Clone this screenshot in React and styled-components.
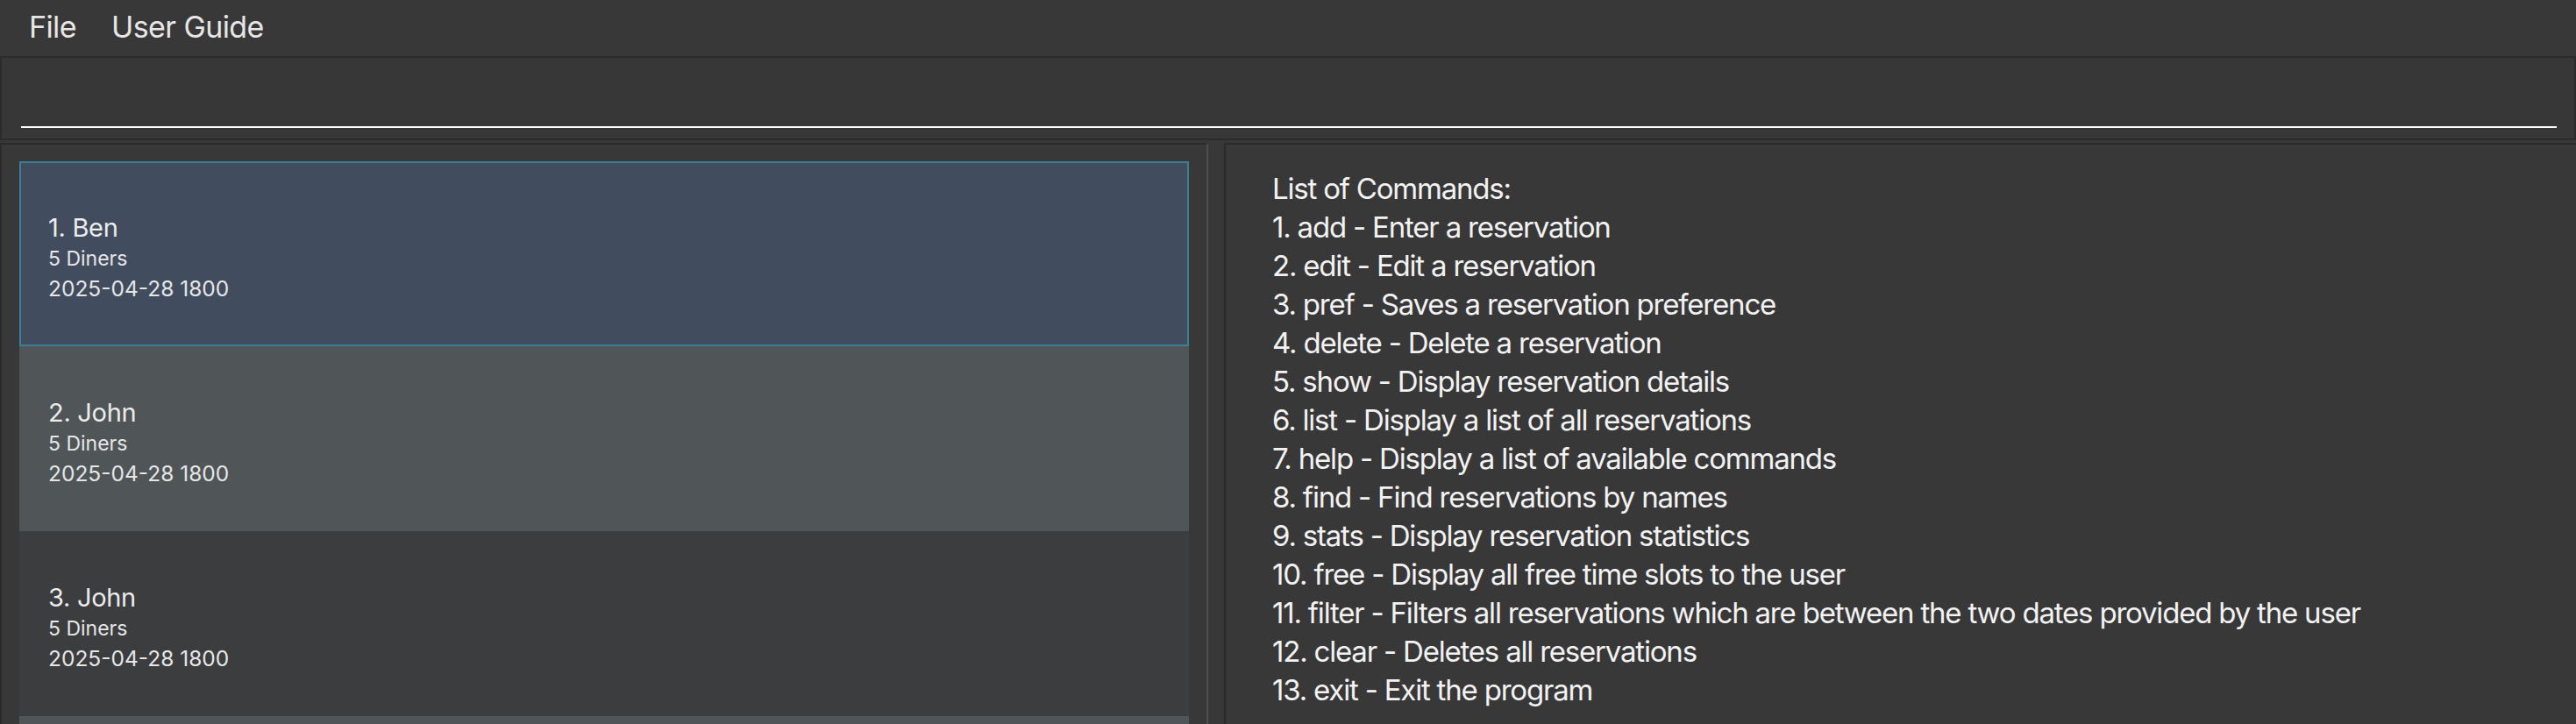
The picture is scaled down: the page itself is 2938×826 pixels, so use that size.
import React from 'react';
import styled, { createGlobalStyle } from 'styled-components';

const GlobalStyle = createGlobalStyle`
  html, body {
    margin: 0;
    padding: 0;
    height: 100%;
    overflow: hidden;
    background: #383838;
  }
  #root {
    height: 100vh;
  }
  * {
    box-sizing: border-box;
  }
`;

const Window = styled.div`
  height: 100vh;
  display: flex;
  flex-direction: column;
  background: #383838;
  font-family: Inter, "Noto Sans", sans-serif;
  color: #ececec;
`;

const MenuBar = styled.div`
  height: 66px;
  flex: none;
  display: flex;
  align-items: center;
  gap: 40px;
  padding: 0 33px 2px;
  border-bottom: 2px solid #2b2b2b;
  background: #383838;
`;

const MenuItem = styled.span`
  font-size: 34px;
  line-height: 1;
  letter-spacing: -0.6px;
  color: #e6e6e6;
`;

const CommandBox = styled.div`
  height: 94px;
  flex: none;
  display: flex;
  align-items: flex-end;
  padding: 0 20px 12px 22px;
  border: 2px solid #2b2b2b;
  border-top: none;
  background: #373737;
`;

const CommandInput = styled.input`
  width: 100%;
  height: 40px;
  background: transparent;
  border: none;
  border-bottom: 2px solid #ffffff;
  outline: none;
  color: #ffffff;
  font-family: inherit;
  font-size: 30px;
`;

const Main = styled.div`
  flex: 1;
  min-height: 0;
  display: flex;
  padding-top: 3px;
`;

const ListPanel = styled.div`
  width: 1378px;
  flex: none;
  padding: 19px 20px 0 20px;
  border-left: 2px solid #2b2b2b;
  border-top: 2px solid #2b2b2b;
  border-right: 2px solid #4d4d4d;
  display: flex;
  flex-direction: column;
  overflow: hidden;
`;

const Splitter = styled.div`
  width: 18px;
  flex: none;
  background: #383838;
`;

const Card = styled.div`
  height: 211px;
  flex: none;
  display: flex;
  flex-direction: column;
  justify-content: center;
  padding: 8px 0 0 31px;
  background: ${(p) => (p.$selected ? '#414d5f' : p.$odd ? '#3c3d3f' : '#505558')};
  border: 2px solid ${(p) => (p.$selected ? '#3b7f96' : 'transparent')};
`;

const Name = styled.div`
  font-size: 29px;
  line-height: 36px;
  letter-spacing: -0.3px;
  color: #ececec;
`;

const Detail = styled.div`
  font-size: ${(p) => p.$size}px;
  line-height: 34px;
  color: #e6e6e6;
`;

const HelpPanel = styled.div`
  flex: 1;
  padding: 28px 40px 0 53px;
  border-left: 2px solid #2b2b2b;
  border-top: 2px solid #2b2b2b;
  overflow: hidden;
`;

const HelpLine = styled.div`
  font-size: 33px;
  line-height: 44px;
  letter-spacing: -1.2px;
  color: #f2f2f2;
  white-space: nowrap;
`;

const reservations = [
  { name: 'Ben', diners: 5, when: '2025-04-28 1800' },
  { name: 'John', diners: 5, when: '2025-04-28 1800' },
  { name: 'John', diners: 5, when: '2025-04-28 1800' },
  { name: 'Mary', diners: 3, when: '2025-04-29 1900' },
];

const commands = [
  'List of Commands:',
  '1. add - Enter a reservation',
  '2. edit - Edit a reservation',
  '3. pref - Saves a reservation preference',
  '4. delete - Delete a reservation',
  '5. show - Display reservation details',
  '6. list - Display a list of all reservations',
  '7. help - Display a list of available commands',
  '8. find - Find reservations by names',
  '9. stats - Display reservation statistics',
  '10. free - Display all free time slots to the user',
  '11. filter - Filters all reservations which are between the two dates provided by the user',
  '12. clear - Deletes all reservations',
  '13. exit - Exit the program',
];

export default function App() {
  return (
    <>
      <GlobalStyle />
      <Window>
        <MenuBar>
          <MenuItem>File</MenuItem>
          <MenuItem>User Guide</MenuItem>
        </MenuBar>
        <CommandBox>
          <CommandInput type="text" />
        </CommandBox>
        <Main>
          <ListPanel>
            {reservations.map((r, i) => (
              <Card key={i} $selected={i === 0} $odd={i % 2 === 0}>
                <Name>{i + 1}. {r.name}</Name>
                <Detail $size={23}>{r.diners} Diners</Detail>
                <Detail $size={24.5}>{r.when}</Detail>
              </Card>
            ))}
          </ListPanel>
          <Splitter />
          <HelpPanel>
            {commands.map((c) => (
              <HelpLine key={c}>{c}</HelpLine>
            ))}
          </HelpPanel>
        </Main>
      </Window>
    </>
  );
}
